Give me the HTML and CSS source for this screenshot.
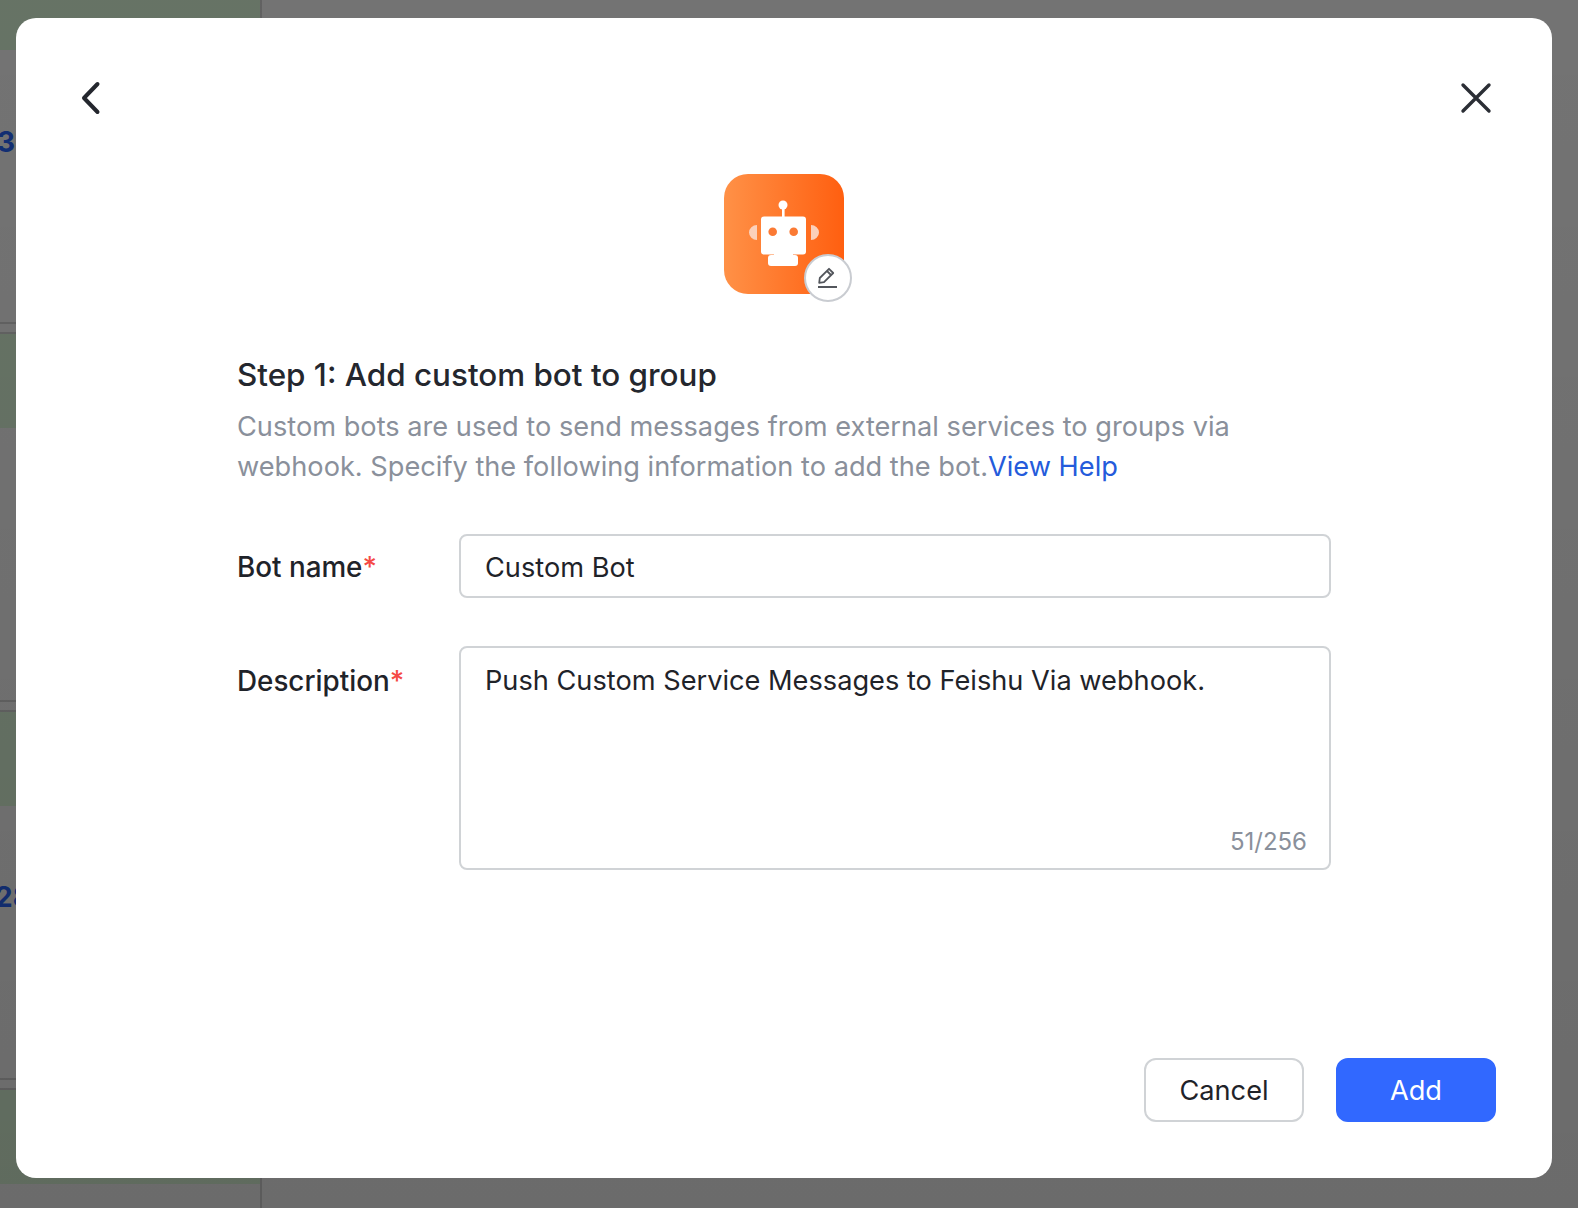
FILE: index.html
```html
<!DOCTYPE html>
<html>
<head>
<meta charset="utf-8">
<title>Add custom bot</title>
<link rel="stylesheet" href="styles.css">
</head>
<body>

<div id="page">
	<div class="row row-first"><div class="row-head"></div><div class="row-num">3</div></div>
	<div class="row"><div class="row-head"></div></div>
	<div class="row"><div class="row-head"></div><div class="row-num row-num-wide">28</div></div>
	<div class="row row-last"><div class="row-head"></div></div>
	<div id="divider"></div>
</div>

<div id="mask">
	<div id="dialog">
		<div class="dialog-top">
			<button class="icon-btn" aria-label="Back">
				<svg width="40" height="40" viewBox="0 0 40 40" fill="none" stroke="#24272e" stroke-width="4" stroke-linecap="round" stroke-linejoin="round"><path d="M25.5 6 L12 20 L25.5 34"/></svg>
			</button>
			<button class="icon-btn" aria-label="Close">
				<svg width="40" height="40" viewBox="0 0 40 40" fill="none" stroke="#2b2e35" stroke-width="3.4" stroke-linecap="round"><path d="M7 7 L33 33 M33 7 L7 33"/></svg>
			</button>
		</div>

		<div class="avatar">
			<svg width="120" height="120" viewBox="0 0 120 120">
				<path d="M33 51 a8 7.5 0 0 0 0 15 z M87 51 a8 7.5 0 0 1 0 15 z" fill="#fbd0ba"/>
				<circle cx="59" cy="31" r="4.5" fill="#fff"/>
				<rect x="58" y="33" width="2.6" height="11" fill="#fff"/>
				<rect x="37" y="42.500" width="45" height="38" rx="3" fill="#fff"/>
				<rect x="50" y="78.500" width="19" height="5" fill="#fff"/>
				<rect x="44" y="81" width="30" height="11" rx="3" fill="#fff"/>
				<circle cx="48.700" cy="57.700" r="4.300" fill="#fb7a34"/>
				<circle cx="69.700" cy="57.700" r="4.300" fill="#fb7a34"/>
			</svg>
			<span class="avatar-edit">
				<svg width="24" height="24" viewBox="0 0 24 24" fill="none" stroke="#53565c" stroke-width="1.800" stroke-linejoin="round"><path d="M3.200 16.800 L3.800 12 L13 2.800 L17.200 7 L8 16.200 Z M11 5 L15 9"/><path d="M2 21 H21" stroke-width="2"/></svg>
			</span>
		</div>

		<div class="form">
			<h2 class="title">Step 1: Add custom bot to group</h2>
			<p class="desc">Custom bots are used to send messages from external services to groups via webhook. Specify the following information to add the bot.<a href="#">View Help</a></p>

			<div class="field field-name">
				<label>Bot name<i>*</i></label>
				<input class="input" type="text" value="Custom Bot">
			</div>
			<div class="field field-desc">
				<label>Description<i>*</i></label>
				<div class="area-wrap">
					<textarea class="input area">Push Custom Service Messages to Feishu Via webhook.</textarea>
					<span class="count">51/256</span>
				</div>
			</div>
		</div>

		<div class="dialog-foot">
			<button class="btn">Cancel</button>
			<button class="btn btn-primary">Add</button>
		</div>
	</div>
</div>

</body>
</html>
```

FILE: styles.css
```css
* {
	box-sizing: border-box;
}

html, body {
	height: 100%;
	margin: 0;
	padding: 0;
}

body {
	font-family: Inter, "Liberation Sans", sans-serif;
	background: #fff;
	overflow: hidden;
	color: #1f2329;
}

/* page behind the dialog */
#page {
	height: 100%;
	overflow: hidden;
}

.row {
	width: 260px;
	height: 378px;
	padding-top: 8px;
	border-top: 2px solid #d8d8d8;
}

.row-first {
	height: 322px;
	padding-top: 0;
	border-top: 0;
}

.row-last {
	height: 130px;
}

.row-head {
	height: 96px;
	border-top: 2px solid #d8d8d8;
	background: #e3ffe0;
}

.row-first .row-head {
	height: 50px;
	border-top: 0;
}

.row-num {
	margin-top: 75px;
	margin-left: -3px;
	font-size: 28px;
	line-height: 34px;
	font-weight: 700;
	color: #2966ff;
}

.row-num-wide {
	margin-top: 74px;
	margin-left: -5px;
}

#divider {
	position: absolute;
	top: 0;
	bottom: 0;
	left: 260px;
	width: 2px;
	background: #d8d8d8;
}

#mask {
	position: absolute;
	top: 0;
	left: 0;
	right: 0;
	bottom: 0;
	padding: 18px 26px 30px 16px;
	background: linear-gradient(180deg, rgba(0,0,0,.55), rgba(0,0,0,.58));
}

#dialog {
	display: flex;
	flex-direction: column;
	height: 100%;
	background: #fff;
	border-radius: 20px;
}

.dialog-top {
	display: flex;
	justify-content: space-between;
	padding: 60px 52px 0 52px;
}

.icon-btn {
	width: 48px;
	height: 40px;
	padding: 0;
	border: 0;
	background: none;
	display: flex;
	align-items: center;
	justify-content: center;
}

.avatar {
	position: relative;
	align-self: center;
	width: 120px;
	height: 120px;
	margin-top: 56px;
	border-radius: 24px;
	background: linear-gradient(90deg, #ff9147, #ff5f10);
}

.avatar svg {
	display: block;
}

.avatar-edit {
	position: absolute;
	right: -8px;
	bottom: -8px;
	width: 48px;
	height: 48px;
	display: flex;
	align-items: center;
	justify-content: center;
	border: 2px solid #c9ccd1;
	border-radius: 50%;
	background: #fff;
}

.form {
	width: 1094px;
	margin: 57px 0 0 221px;
}

.title {
	margin: 0;
	font-size: 31.400px;
	line-height: 48px;
	font-weight: 500;
	color: #24272e;
}

.desc {
	width: 1092px;
	margin: 8px 0 0 0;
	font-size: 27.200px;
	line-height: 40px;
	color: #8a909b;
}

.desc a {
	color: #245bdb;
	text-decoration: none;
}

.field {
	display: flex;
	margin-top: 47px;
}

.field label {
	width: 222px;
	flex: none;
	font-size: 27.800px;
	line-height: 64px;
	font-weight: 500;
	padding-top: 1px;
}

.field-desc label {
	padding-top: 3px;
}

.field label i {
	font-style: normal;
	color: #f54a45;
}

.input {
	display: block;
	width: 872px;
	height: 64px;
	padding: 2px 24px 0 24px;
	border: 2px solid #d0d3d6;
	border-radius: 8px;
	outline: none;
	font-family: inherit;
	font-size: 27.200px;
	color: #1f2329;
	background: #fff;
}

.area-wrap {
	position: relative;
}

.area {
	height: 224px;
	padding: 13px 24px;
	line-height: 40px;
	resize: none;
}

.count {
	position: absolute;
	right: 24px;
	bottom: 10px;
	font-size: 24px;
	line-height: 36px;
	color: #8a909b;
}

.dialog-foot {
	display: flex;
	justify-content: flex-end;
	gap: 32px;
	margin-top: auto;
	padding: 0 56px 56px 0;
}

.btn {
	width: 160px;
	height: 64px;
	padding: 0;
	border: 2px solid #d0d3d6;
	border-radius: 12px;
	background: #fff;
	font-family: inherit;
	font-size: 27.200px;
	color: #1f2329;
}

.btn-primary {
	border-color: #3168ff;
	background: #3168ff;
	color: #fff;
}
```
